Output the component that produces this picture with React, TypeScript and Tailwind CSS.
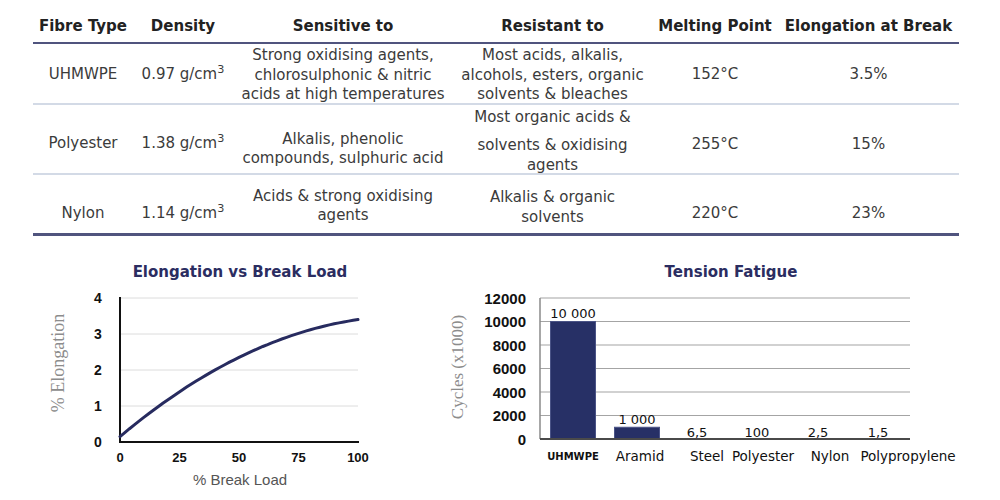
const cols = "grid grid-cols-[100px_100px_220px_199px_126px_181px]";

const ElongationChart = () => {
  // elongation (%) as a function of break load (%), fitted to the drawn curve
  const pts: string[] = [];
  for (let l = 0; l <= 100; l += 2) {
    const v = 0.15 + 0.0555 * l - 0.00023 * l * l;
    pts.push(`${(120 + 2.38 * l).toFixed(1)},${(160 - 36 * v).toFixed(1)}`);
  }
  const grid = [16, 52, 88, 124];
  const yTicks = ["4", "3", "2", "1", "0"];
  const xTicks = ["0", "25", "50", "75", "100"];

  return (
    <svg width={400} height={218} className="block">
      {grid.map((y) => (
        <line key={y} x1={120} x2={358} y1={y} y2={y} stroke="#dcdcdc" strokeWidth={1} />
      ))}
      <line x1={120} x2={120} y1={15} y2={161} stroke="#111" strokeWidth={2} />
      <line x1={119} x2={359} y1={160} y2={160} stroke="#111" strokeWidth={2} />
      {yTicks.map((t, i) => (
        <text key={t} x={98} y={16 + i * 36} textAnchor="middle" dominantBaseline="central"
          fontFamily="'Liberation Sans', Arial, sans-serif" fontWeight="bold" fontSize={14} fill="#111">{t}</text>
      ))}
      {xTicks.map((t, i) => (
        <text key={t} x={120 + i * 59.5} y={175} textAnchor="middle" dominantBaseline="central"
          fontFamily="'Liberation Sans', Arial, sans-serif" fontWeight="bold" fontSize={13} fill="#111">{t}</text>
      ))}
      <polyline points={pts.join(" ")} fill="none" stroke="#272b5f" strokeWidth={3} strokeLinecap="round" />
      <text x={240} y={197} textAnchor="middle" dominantBaseline="central"
        fontFamily="'Liberation Sans', Arial, sans-serif" fontSize={15} fill="#555">% Break Load</text>
      <text x={58} y={81} textAnchor="middle" dominantBaseline="central" transform="rotate(-90 58 81)"
        fontFamily="'Liberation Serif', 'Times New Roman', serif" fontSize={18} fill="#8c8c8c">% Elongation</text>
    </svg>
  );
};

const bars = [
  { name: "UHMWPE", value: "10 000", v: 10000, cx: 173, lx: 173, small: true },
  { name: "Aramid", value: "1 000", v: 1000, cx: 237, lx: 240 },
  { name: "Steel", value: "6,5", v: 6.5, cx: 297, lx: 307 },
  { name: "Polyester", value: "100", v: 100, cx: 357, lx: 363 },
  { name: "Nylon", value: "2,5", v: 2.5, cx: 418, lx: 430 },
  { name: "Polypropylene", value: "1,5", v: 1.5, cx: 478, lx: 508 },
];

const FatigueChart = () => {
  const ticks = ["12000", "10000", "8000", "6000", "4000", "2000", "0"];
  const yOf = (v: number) => 157 - (141 * v) / 12000;

  return (
    <svg width={600} height={218} className="block">
      {ticks.slice(0, 6).map((t, i) => (
        <line key={t} x1={140} x2={510} y1={16 + i * 23.5} y2={16 + i * 23.5} stroke="#a4a4a4" strokeWidth={1.2} />
      ))}
      <line x1={140} x2={140} y1={16} y2={157} stroke="#8a8a8a" strokeWidth={1.5} />
      {ticks.map((t, i) => (
        <text key={t} x={126} y={16 + i * 23.5} textAnchor="end" dominantBaseline="central"
          fontFamily="'Liberation Sans', Arial, sans-serif" fontWeight="bold" fontSize={15} fill="#111">{t}</text>
      ))}
      {bars.map((b) => {
        const top = yOf(b.v);
        const h = 157 - top;
        const drawn = h > 3;
        return (
          <g key={b.name}>
            {drawn && (
              <rect x={b.cx - 22.5} y={top} width={45} height={h} fill="#273066" stroke="#4a5386" strokeWidth={1} />
            )}
            <text x={b.cx} y={drawn ? top - 8 : 150} textAnchor="middle" dominantBaseline="central"
              fontFamily="'DejaVu Sans', Verdana, sans-serif" fontSize={13} fill="#111">{b.value}</text>
            <text x={b.lx} y={174} textAnchor="middle" dominantBaseline="central"
              fontFamily="'DejaVu Sans', Verdana, sans-serif" fontWeight={b.small ? "bold" : "normal"}
              fontSize={b.small ? 10 : 13.5} fill="#111">{b.name}</text>
          </g>
        );
      })}
      <line x1={140} x2={510} y1={157} y2={157} stroke="#4a4a4a" strokeWidth={2} />
      <text x={57} y={85} textAnchor="middle" dominantBaseline="central" transform="rotate(-90 57 85)"
        fontFamily="'Liberation Serif', 'Times New Roman', serif" fontSize={17} fill="#8c8c8c">Cycles (x1000)</text>
    </svg>
  );
};

export default function App() {
  return (
    <div className="w-[1000px] h-[500px] bg-white overflow-hidden font-['DejaVu_Sans',Verdana,sans-serif]">
      <div className="ml-[33px] w-[926px] text-[15px] text-[#3b3b3b] text-center whitespace-nowrap">
        <div className={`${cols} h-[44px] border-b-2 border-[#50547e] font-bold text-[#222] leading-[20px]`}>
          <div className="pt-[16px]">Fibre Type</div>
          <div className="pt-[16px]">Density</div>
          <div className="pt-[16px]">Sensitive to</div>
          <div className="pt-[16px]">Resistant to</div>
          <div className="pt-[16px]">Melting Point</div>
          <div className="pt-[16px]">Elongation at Break</div>
        </div>

        <div className={`${cols} h-[61px] border-b-2 border-[#d3dae6] leading-[20px]`}>
          <div className="pt-[20px]">UHMWPE</div>
          <div className="pt-[20px]">0.97 g/cm<sup>3</sup></div>
          <div className="pt-[2px] leading-[19.5px]">
            <div>Strong oxidising agents,</div>
            <div>chlorosulphonic &amp; nitric</div>
            <div>acids at high temperatures</div>
          </div>
          <div className="pt-[2px] leading-[19.5px]">
            <div>Most acids, alkalis,</div>
            <div>alcohols, esters, organic</div>
            <div>solvents &amp; bleaches</div>
          </div>
          <div className="pt-[20px]">152°C</div>
          <div className="pt-[20px]">3.5%</div>
        </div>

        <div className={`${cols} h-[70px] border-b-2 border-[#d3dae6] leading-[20px]`}>
          <div className="pt-[28px]">Polyester</div>
          <div className="pt-[28px]">1.38 g/cm<sup>3</sup></div>
          <div className="pt-[25px] leading-[19px]">
            <div>Alkalis, phenolic</div>
            <div>compounds, sulphuric acid</div>
          </div>
          <div className="pt-[2px]">
            <div>Most organic acids &amp;</div>
            <div className="mt-[8px]">solvents &amp; oxidising</div>
            <div>agents</div>
          </div>
          <div className="pt-[29px]">255°C</div>
          <div className="pt-[29px]">15%</div>
        </div>

        <div className={`${cols} h-[61px] border-b-[3px] border-[#50547e] leading-[20px]`}>
          <div className="pt-[28px]">Nylon</div>
          <div className="pt-[28px]">1.14 g/cm<sup>3</sup></div>
          <div className="pt-[12px] leading-[19px]">
            <div>Acids &amp; strong oxidising</div>
            <div>agents</div>
          </div>
          <div className="pt-[12px]">
            <div>Alkalis &amp; organic</div>
            <div>solvents</div>
          </div>
          <div className="pt-[28px]">220°C</div>
          <div className="pt-[28px]">23%</div>
        </div>
      </div>

      <div className="flex">
        <div className="w-[400px]">
          <div className="mt-[26px] ml-[120px] w-[240px] text-center text-[15px] leading-[20px] font-bold text-[#2b2d61] whitespace-nowrap">
            Elongation vs Break Load
          </div>
          <ElongationChart />
        </div>
        <div className="w-[600px]">
          <div className="mt-[26px] w-[662px] text-center text-[15px] leading-[20px] font-bold text-[#2b2d61] whitespace-nowrap">
            Tension Fatigue
          </div>
          <FatigueChart />
        </div>
      </div>
    </div>
  );
}
